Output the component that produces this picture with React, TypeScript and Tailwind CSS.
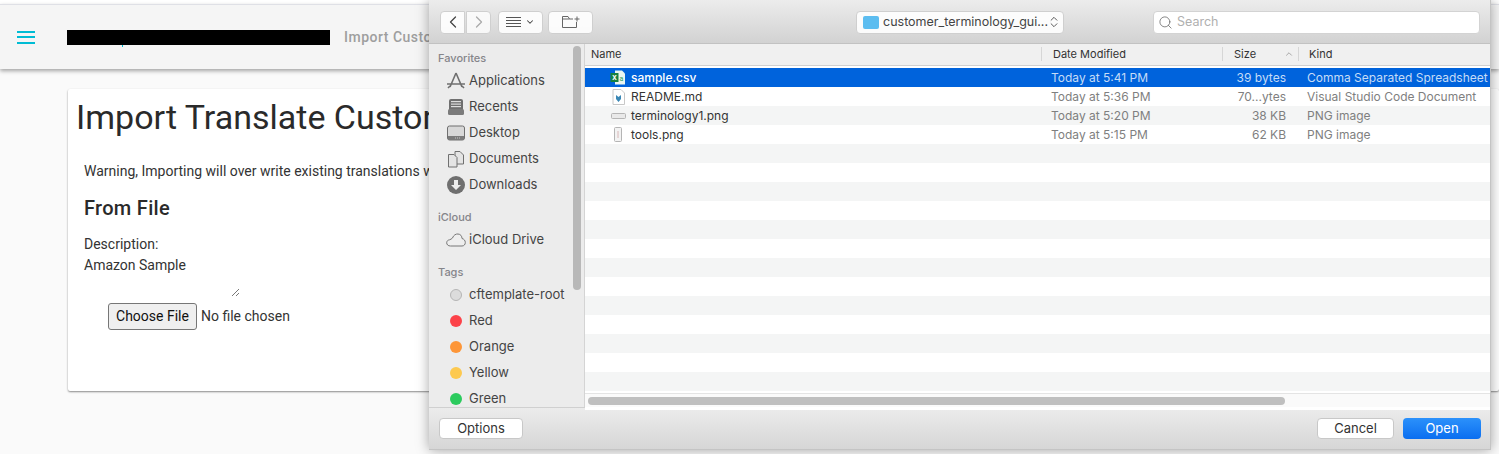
import { ChevronLeft, ChevronRight, ChevronDown, ChevronUp, ChevronsUpDown, Search } from 'lucide-react';

const sans = 'font-["Roboto",sans-serif]';
const mac = 'font-["Inter","Liberation_Sans",sans-serif]';

// Icons for the sidebar of the file dialog
function AppsIcon() {
  return (
    <svg width="20" height="18" viewBox="0 0 20 18" fill="none" stroke="#6f6f6f" strokeWidth="1.6">
      <path d="M10 1 L16 15 M10 1 L4 15 M1 12 H19" />
      <path d="M2 16 L4 14 M18 16 L16 14" />
    </svg>
  );
}

function RecentsIcon() {
  return (
    <svg width="18" height="18" viewBox="0 0 18 18">
      <rect x="2" y="1" width="14" height="16" rx="2" fill="#6f6f6f" />
      <rect x="4" y="3" width="10" height="1.2" fill="#ddd" />
      <rect x="4" y="5.5" width="10" height="1.2" fill="#ddd" />
      <rect x="4" y="8" width="10" height="1.2" fill="#ddd" />
      <rect x="1" y="11" width="16" height="6" rx="1.5" fill="#7b7b7b" />
    </svg>
  );
}

function DesktopIcon() {
  return (
    <svg width="18" height="16" viewBox="0 0 18 16">
      <rect x="0.5" y="1" width="17" height="14" rx="2" fill="#d8d8d8" stroke="#6f6f6f" />
      <rect x="1" y="11" width="16" height="4" fill="#7b7b7b" />
      <path d="M8 13 h.8 M10 13 h.8 M12 13 h.8" stroke="#ddd" />
    </svg>
  );
}

function DocumentsIcon() {
  return (
    <svg width="18" height="18" viewBox="0 0 18 18" fill="#e4e4e4" stroke="#707070">
      <path d="M8 1.5 H13 L16.5 5 V14 H8 Z" />
      <path d="M1.5 4.5 H7 L10 7.5 V17 H1.5 Z" />
    </svg>
  );
}

function DownloadsIcon() {
  return (
    <svg width="18" height="18" viewBox="0 0 18 18">
      <circle cx="9" cy="9" r="9" fill="#6f6f6f" />
      <path d="M7 4 H11 V9 H14 L9 14 L4 9 H7 Z" fill="#eee" />
    </svg>
  );
}

function CloudIcon() {
  return (
    <svg width="20" height="14" viewBox="0 0 20 14" fill="#eee" stroke="#777">
      <path d="M4.5 13 C2 13 .7 11.5 .7 9.8 C.7 8 2 7 3.5 6.8 C4.5 6.5 5.5 6 6.5 5 C7.5 2 10 .8 12 1 C14.5 1.2 16 3 16 5.5 C18 6 19.3 7.5 19.3 9.5 C19.3 11.5 18 13 16 13 Z" />
    </svg>
  );
}

function CsvIcon() {
  return (
    <svg width="16" height="15" viewBox="0 0 16 15">
      <path d="M5 .5 H12 L15 3.5 V14.5 H5 Z" fill="#eaf6f0" />
      <rect x="0.5" y="3" width="8" height="9" fill="#17803f" />
      <text x="2.2" y="10" fontSize="7" fill="#fff" fontFamily="Roboto" fontWeight="700">X</text>
      <text x="9.5" y="11" fontSize="7" fill="#2a9d60" fontFamily="Roboto">a</text>
    </svg>
  );
}

function MdIcon() {
  return (
    <svg width="13" height="16" viewBox="0 0 13 16">
      <path d="M1 .5 H9 L12.5 4 V15.5 H1 Z" fill="#fff" stroke="#c8c8c8" />
      <path d="M4 6 L6.5 8 L9 6 V10 L6.5 13 L4 10 Z" fill="#3a87b5" />
    </svg>
  );
}

function WideIcon() {
  return (
    <svg width="15" height="6" viewBox="0 0 15 6">
      <rect x="0.5" y="0.5" width="14" height="5" rx="1" fill="#e9e9e9" stroke="#b5b5b5" />
    </svg>
  );
}

function TallIcon() {
  return (
    <svg width="8" height="15" viewBox="0 0 8 15">
      <rect x="0.5" y="0.5" width="7" height="14" rx="1" fill="#f3f3f3" stroke="#b5b5b5" />
      <path d="M4 4 V11" stroke="#d8b8b8" />
    </svg>
  );
}

function ListViewIcon() {
  return (
    <svg width="15" height="12" viewBox="0 0 15 12" stroke="#555" strokeWidth="1">
      <path d="M0 1.5 H15 M0 4.5 H15 M0 7.5 H15 M0 10.5 H15" />
    </svg>
  );
}

function NewFolderIcon() {
  return (
    <svg width="18" height="12" viewBox="0 0 18 12" fill="none" stroke="#666" strokeWidth="1">
      <path d="M.5 2 V11.5 H14.5 V6 M.5 2 V.5 H6 L7.5 3 H11 M.5 3 H7.5" />
      <path d="M15 .5 V5.5 M12.5 3 H17.5" />
    </svg>
  );
}

const files = [
  { icon: <CsvIcon />, name: 'sample.csv', date: 'Today at 5:41 PM', size: '39 bytes', kind: 'Comma Separated Spreadsheet' },
  { icon: <MdIcon />, name: 'README.md', date: 'Today at 5:36 PM', size: '70...ytes', kind: 'Visual Studio Code Document' },
  { icon: <WideIcon />, name: 'terminology1.png', date: 'Today at 5:20 PM', size: '38 KB', kind: 'PNG image' },
  { icon: <TallIcon />, name: 'tools.png', date: 'Today at 5:15 PM', size: '62 KB', kind: 'PNG image' },
];

const favorites = [
  { icon: <AppsIcon />, label: 'Applications' },
  { icon: <RecentsIcon />, label: 'Recents' },
  { icon: <DesktopIcon />, label: 'Desktop' },
  { icon: <DocumentsIcon />, label: 'Documents' },
  { icon: <DownloadsIcon />, label: 'Downloads' },
];

const tags = [
  { className: 'bg-[#dcdcdc] border border-[#b5b5b5]', label: 'cftemplate-root' },
  { className: 'bg-[#fc4249]', label: 'Red' },
  { className: 'bg-[#fd9638]', label: 'Orange' },
  { className: 'bg-[#fdc94f]', label: 'Yellow' },
  { className: 'bg-[#2ccb5e]', label: 'Green' },
];

function SideRow({ icon, label }: { icon: React.ReactNode; label: string }) {
  return (
    <div className="flex h-[26px] items-center">
      <div className="flex w-[40px] shrink-0 justify-center pl-[14px]">{icon}</div>
      <span className="text-[13px] text-[#444]">{label}</span>
    </div>
  );
}

function TagRow({ className, label }: { className: string; label: string }) {
  return (
    <div className="flex h-[26px] items-center">
      <div className="flex w-[40px] shrink-0 justify-center pl-[14px]">
        <span className={`block h-[12px] w-[12px] rounded-full ${className}`} />
      </div>
      <span className="text-[13px] text-[#444]">{label}</span>
    </div>
  );
}

function FileDialog() {
  return (
    <div className={`absolute left-[429px] top-0 flex h-[450px] w-[1062px] flex-col overflow-hidden border-r border-b border-[#c4c4c4] shadow-[0_0_12px_rgba(0,0,0,0.35)] ${mac}`}>
      {/* Toolbar */}
      <div className="relative flex h-[44px] shrink-0 items-center border-b border-[#c2c2c2] bg-gradient-to-b from-[#ececec] to-[#d2d2d2] pl-[11px] pt-[1px]">
        <div className="flex h-[23px] w-[25px] items-center justify-center rounded-l-[4px] border border-[#cfcfcf] bg-white/90">
          <ChevronLeft className="h-[20px] w-[20px] text-[#444]" strokeWidth={1.5} />
        </div>
        <div className="ml-[1px] flex h-[23px] w-[25px] items-center justify-center rounded-r-[4px] border border-[#cfcfcf] bg-white/80">
          <ChevronRight className="h-[20px] w-[20px] text-[#aaa]" strokeWidth={1.5} />
        </div>
        <div className="ml-[7px] flex h-[23px] w-[45px] items-center justify-center gap-[4px] rounded-[4px] border border-[#cfcfcf] bg-white/90">
          <ListViewIcon />
          <ChevronDown className="h-[10px] w-[10px] text-[#444]" strokeWidth={2.5} />
        </div>
        <div className="ml-[5px] flex h-[23px] w-[45px] items-center justify-center rounded-[4px] border border-[#cfcfcf] bg-white/90">
          <NewFolderIcon />
        </div>
        <div className="ml-[263px] flex h-[23px] w-[208px] items-center rounded-[4px] border border-[#cfcfcf] bg-white/90 pl-[6px] text-[12.5px] text-[#444]">
          <span className="h-[13px] w-[16px] shrink-0 rounded-[2px] bg-[#5cbdf0]" />
          <span className="ml-[4px] w-[163px] shrink-0 whitespace-nowrap">customer_terminology_gui...</span>
          <ChevronsUpDown className="ml-[1px] h-[14px] w-[14px] shrink-0 text-[#444]" strokeWidth={1.5} />
        </div>
        <div className="ml-[89px] flex h-[23px] w-[327px] items-center rounded-[4px] border border-[#d3d3d3] bg-white pl-[4px] text-[12.5px] text-[#b0b0b0]">
          <Search className="h-[15px] w-[15px] text-[#666]" strokeWidth={1.25} />
          <span className="ml-[4px]">Search</span>
        </div>
      </div>

      <div className="flex min-h-0 flex-1">
        {/* Sidebar */}
        <div className="relative w-[156px] shrink-0 overflow-hidden border-r border-[#d4d4d4] bg-[#ececec] pt-[6px]">
          <div className="pl-[9px] text-[11px] font-medium leading-[16px] text-[#85858a]">Favorites</div>
          <div className="mt-[2px]">
            {favorites.map((f) => (
              <SideRow key={f.label} icon={f.icon} label={f.label} />
            ))}
          </div>
          <div className="mt-[11px] pl-[9px] text-[11px] font-medium leading-[16px] text-[#85858a]">iCloud</div>
          <div className="mt-[2px]">
            <SideRow icon={<CloudIcon />} label="iCloud Drive" />
          </div>
          <div className="mt-[11px] pl-[9px] text-[11px] font-medium leading-[16px] text-[#85858a]">Tags</div>
          <div className="mt-[2px]">
            {tags.map((t) => (
              <TagRow key={t.label} className={t.className} label={t.label} />
            ))}
          </div>
          {/* overlay scrollbar */}
          <div className="absolute left-[144px] top-[2px] h-[244px] w-[8px] rounded-full bg-[#b8b8b8]" />
        </div>

        {/* File list */}
        <div className="relative flex min-w-0 flex-1 flex-col bg-white">
          <div className="flex h-[22px] shrink-0 items-center border-b border-[#d0d0d0] bg-[#f0f0f0] pb-[1px] text-[11px] text-[#333]">
            <div className="w-[456px] pl-[6px]">Name</div>
            <div className="h-[14px] w-[181px] border-l border-[#d6d6d6] pl-[11px] leading-[14px]">Date Modified</div>
            <div className="relative h-[14px] w-[59px] border-l border-[#d6d6d6] pl-[11px] leading-[14px]">
              Size
              <ChevronUp className="absolute right-[-13px] top-[2px] h-[10px] w-[10px] text-[#999]" />
            </div>
            <div className="ml-[17px] h-[14px] border-l border-[#d6d6d6] pl-[10px] leading-[14px]">Kind</div>
          </div>
          <div className="h-[2px] shrink-0 bg-white" />
          {[...Array(18).keys()].map((i) => {
            const f = files[i];
            const selected = i === 0;
            return (
              <div
                key={i}
                className={`flex h-[19px] shrink-0 items-center text-[12px] ${selected ? 'bg-[#0063dc] text-[#c5dcf7]' : i % 2 === 0 ? 'bg-[#f4f5f5] text-[#7f7f7f]' : 'bg-white text-[#7f7f7f]'}`}
              >
                {f && (
                  <>
                    <div className="flex w-[46px] shrink-0 justify-center pl-[25px] pr-[5px]">{f.icon}</div>
                    <div className={`w-[420px] shrink-0 ${selected ? 'font-medium text-white' : 'text-[#333]'}`}>{f.name}</div>
                    <div className="w-[165px] shrink-0">{f.date}</div>
                    <div className="w-[70px] shrink-0 text-right">{f.size}</div>
                    <div className="ml-[21px] whitespace-nowrap">{f.kind}</div>
                  </>
                )}
              </div>
            );
          })}
          {/* horizontal scrollbar */}
          <div className="absolute bottom-0 left-0 right-0 flex h-[14px] items-center border-t border-[#e4e4e4] bg-[#fafafa] pl-[3px]">
            <div className="h-[8px] w-[697px] rounded-full bg-[#bfbfbf]" />
          </div>
        </div>
      </div>

      {/* Bottom bar */}
      <div className="flex h-[42px] shrink-0 items-center justify-between border-t border-[#d0d0d0] bg-gradient-to-b from-[#ececec] to-[#d6d6d6] pl-[10px] pr-[9px] text-[13px]">
        <button className="h-[21px] w-[84px] rounded-[4px] border border-[#c8c8c8] bg-white text-[#333]">Options</button>
        <div className="flex gap-[9px]">
          <button className="h-[21px] w-[77px] rounded-[4px] border border-[#c8c8c8] bg-white text-[#333]">Cancel</button>
          <button className="h-[21px] w-[78px] rounded-[4px] bg-gradient-to-b from-[#2b91fb] to-[#0a6ef0] text-white">Open</button>
        </div>
      </div>
    </div>
  );
}

export default function App() {
  return (
    <div className={`relative h-[454px] w-[1499px] overflow-hidden bg-[#fafafa] ${sans}`}>
      <div className="h-[4px] bg-white" />
      {/* Header bar */}
      <div className="flex h-[65px] items-center border-t border-[#dfe0e6] bg-[#f5f5f5] shadow-[0_2px_4px_rgba(0,0,0,0.35)]">
        <div className="ml-[17px] flex w-[18px] flex-col gap-[3.5px]">
          <span className="block h-[2px] bg-[#00bcd4]" />
          <span className="block h-[2px] bg-[#00bcd4]" />
          <span className="block h-[2px] bg-[#00bcd4]" />
        </div>
        <div className="relative ml-[32px] h-[15px] w-[263px] bg-black">
          <span className="absolute left-[55px] top-[15px] block h-[2px] w-[1px] bg-[#00bcd4]" />
        </div>
        <span className="ml-[14px] whitespace-nowrap text-[14px] font-medium tracking-[0.5px] text-[#9e9e9e]">Import Custom</span>
      </div>

      {/* Card, runs on behind the dialog */}
      <div className="ml-[68px] mt-[20px] h-[302px] w-[1431px] rounded-[2px] bg-white shadow-[0_1px_2px_rgba(0,0,0,0.45)]">
        <h1 className="whitespace-nowrap pl-[8px] pt-[8px] text-[34px] font-normal leading-[40px] text-[#2a2a2a]">Import Translate Custom</h1>
        <p className="mt-[24px] whitespace-nowrap pl-[16px] text-[14px] leading-[20px] text-[#333]">Warning, Importing will over write existing translations with</p>
        <h2 className="mt-[15px] pl-[16px] text-[20px] font-medium leading-[24px] tracking-[0.3px] text-[#2a2a2a]">From File</h2>
        <div className="mt-[14px] pl-[16px] text-[14px] leading-[21px] text-[#333]">Description:</div>
        <div className="relative w-[171px] pl-[16px] text-[14px] leading-[21px] text-[#333]">
          Amazon Sample
          <svg className="absolute right-[-1px] top-[33px]" width="9" height="9" viewBox="0 0 9 9" stroke="#555" strokeWidth="0.8">
            <path d="M1 8 L8 1 M5 8 L8 5" />
          </svg>
        </div>
        <div className="ml-[40px] mt-[27px] flex items-center text-[14px]">
          <button className="h-[27px] w-[89px] rounded-[3px] border border-[#767676] bg-[#efefef] text-[#111]">Choose File</button>
          <span className="ml-[4px] text-[#333]">No file chosen</span>
        </div>
      </div>

      <FileDialog />
    </div>
  );
}
